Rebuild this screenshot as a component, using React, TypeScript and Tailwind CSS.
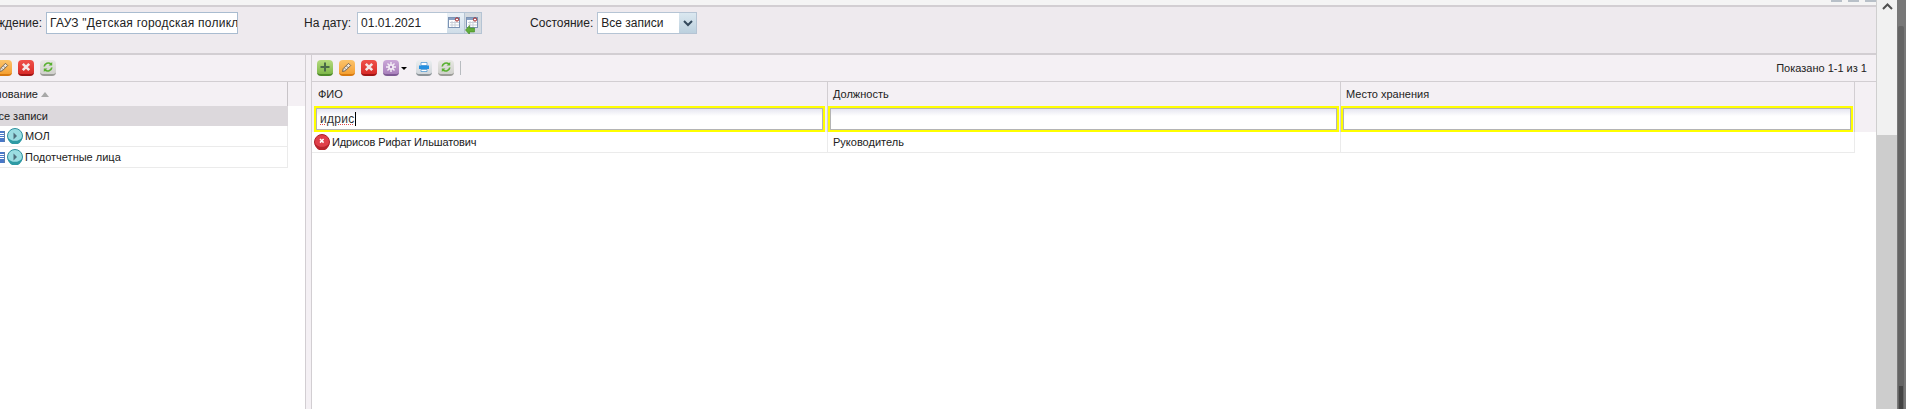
const font = "font-['Liberation_Sans',sans-serif]";

function ToolIcon({ tone, children }: { tone: string; children: React.ReactNode }) {
  return (
    <div className={`flex h-4 w-4 shrink-0 items-center justify-center rounded-[4px] border-b-2 bg-gradient-to-b ${tone}`}>
      <svg width="12" height="12" viewBox="0 0 12 12">
        {children}
      </svg>
    </div>
  );
}

const AddIcon = () => (
  <ToolIcon tone="from-[#b6dc7e] to-[#7fb84a] border-[#4f8a2a]">
    <path d="M5 1.5h2v3.5h3.5v2H7v3.5H5V7H1.5V5H5z" fill="#4a6a48" />
  </ToolIcon>
);
const EditIcon = () => (
  <ToolIcon tone="from-[#fcc46a] to-[#f5a030] border-[#d87a10]">
    <path d="M1.5 10.5l.8-3 5.2-5.2 2.2 2.2-5.2 5.2z" fill="#efe6da" stroke="#6a5a48" strokeWidth="0.9" />
    <path d="M3.5 7l2 2M5.5 5l2 2" stroke="#6a5a48" strokeWidth="0.7" />
  </ToolIcon>
);
const DeleteIcon = () => (
  <ToolIcon tone="from-[#f0514a] to-[#d82a28] border-[#a01414]">
    <path d="M2.8 2.8l6.4 6.4M9.2 2.8l-6.4 6.4" stroke="#f4e8e8" strokeWidth="2.6" />
  </ToolIcon>
);
const GearIcon = () => (
  <ToolIcon tone="from-[#cba8d8] to-[#a980bc] border-[#7e5a94]">
    <circle cx="6" cy="6" r="3" fill="#f4eef6" />
    <circle cx="6" cy="6" r="1.2" fill="#a980bc" />
    <path d="M6 1v2M6 9v2M1 6h2M9 6h2M2.5 2.5l1.4 1.4M8.1 8.1l1.4 1.4M9.5 2.5L8.1 3.9M3.9 8.1L2.5 9.5" stroke="#f4eef6" strokeWidth="1.4" />
  </ToolIcon>
);
const PrintIcon = () => (
  <ToolIcon tone="from-[#eceff1] to-[#d2d7db] border-[#8d9499]">
    <path d="M3 1.5h6v3H3z" fill="#fff" stroke="#3f8fd0" strokeWidth="0.7" />
    <path d="M1 4.5h10v3.5H1z" fill="#2490e0" />
    <path d="M3 8.5h6v2H3z" fill="#fff" stroke="#3f8fd0" strokeWidth="0.7" />
  </ToolIcon>
);
const RefreshIcon = () => (
  <ToolIcon tone="from-[#e8e8e4] to-[#d0d0cc] border-[#9c9c98]">
    <path d="M2.2 5.5A4 4 0 0 1 9 3.2M9.8 6.5A4 4 0 0 1 3 8.8" fill="none" stroke="#58b030" strokeWidth="1.7" />
    <path d="M10.2 1v3.6H6.6zM1.8 11V7.4h3.6z" fill="#58b030" />
  </ToolIcon>
);

function CalendarIcon({ back }: { back?: boolean }) {
  return (
    <svg width="16" height="21" viewBox="0 0 16 21">
      <rect x="1.5" y="4.5" width="11" height="10" fill="#fff" stroke="#7c93b4" />
      <rect x="2" y="5" width="10" height="2" fill="#8aa2c4" />
      <path d="M3 9.5h9M3 12h9M5 8v6M8 8v6" stroke="#c9cfd8" />
      <circle cx="10" cy="6.5" r="1.6" fill="#fff" stroke="#a01818" />
      {back && <path d="M0.5 17l4-4.5v2.5h5v4h-5v2.5z" fill="#62ad3a" stroke="#3f8a24" strokeWidth="0.6" />}
    </svg>
  );
}

function PlayBadge() {
  return (
    <svg width="16" height="16" viewBox="0 0 16 16" className="shrink-0">
      <circle cx="8" cy="8" r="7.5" fill="#9adde2" stroke="#2e8f9c" />
      <path d="M1 9.5a7 7 0 0 0 14 0a9 9 0 0 1-14 0z" fill="#2e9aa4" />
      <path d="M6.5 4.5l3.5 3.5-3.5 3.5z" fill="#4f6f7c" />
    </svg>
  );
}

function TreeRow({ label }: { label: string }) {
  return (
    <div className="flex h-[21px] w-[288px] items-center border-b border-r border-[#ebebeb] bg-white">
      <div className="flex h-[11px] w-[5px] shrink-0 flex-col gap-px border-r border-[#5f7fa8] bg-[#4a78c8] pt-[2px]">
        <div className="h-px bg-white" />
        <div className="h-px bg-white" />
        <div className="h-px bg-white" />
      </div>
      <div className="ml-[2px]">
        <PlayBadge />
      </div>
      <span className="ml-[2px]">{label}</span>
    </div>
  );
}

function FilterInput({ value }: { value?: string }) {
  return (
    <div className="flex h-[26px] items-center border-2 border-[#ffff00]">
      <div className="flex h-full w-full items-center border border-[#b4b4b4] bg-gradient-to-b from-[#e6e6f0] to-white to-[35%] pl-[3px] text-[12px] tracking-[0.3px] text-[#333]">
        {value && (
          <>
            <span className="underline decoration-[#e05050] decoration-dotted">{value}</span>
            <span className="h-[14px] w-px bg-black" />
          </>
        )}
      </div>
    </div>
  );
}

export default function App() {
  return (
    <div className={`flex h-[409px] w-[1906px] overflow-hidden bg-white text-[11px] text-[#222] ${font}`}>
      <div className="flex w-[1877px] shrink-0 flex-col border-r border-[#cfcfcf]">
        <div className="flex h-[5px] shrink-0 justify-end gap-[6px] bg-[#f4f4f4]">
          <div className="h-[2px] w-[11px] bg-[#b8c0c8]" />
          <div className="h-[2px] w-[11px] bg-[#b8c0c8]" />
          <div className="h-[2px] w-[11px] bg-[#b8c0c8]" />
        </div>

        {/* filter bar */}
        <div className="flex h-[50px] shrink-0 items-start border-y-2 border-[#d2ced2] bg-[#eeeaee] pt-[5px] text-[12px]">
          <div className="flex h-[22px] w-[42px] items-center justify-end overflow-hidden whitespace-nowrap">Учреждение:</div>
          <div className="ml-[4px] flex h-[22px] w-[192px] items-center overflow-hidden whitespace-nowrap border border-[#a9bcd0] bg-white pl-[3px] tracking-[0.25px]">
            ГАУЗ "Детская городская поликлиника"
          </div>
          <div className="ml-[66px] flex h-[22px] items-center gap-[6px]">
            <span>На дату:</span>
            <div className="flex h-[22px] w-[125px] border border-[#b5c4d4]">
              <div className="flex flex-1 items-center bg-white pl-[3px]">01.01.2021</div>
              <div className="w-[17px] bg-gradient-to-b from-[#eaf1f7] to-[#cfdde8]">
                <CalendarIcon />
              </div>
              <div className="w-[17px] border-l border-[#b5c4d4] bg-[#d4dae0]">
                <CalendarIcon back />
              </div>
            </div>
          </div>
          <div className="ml-[48px] flex h-[22px] items-center gap-[4px]">
            <span>Состояние:</span>
            <div className="flex h-[22px] w-[100px] border border-[#b5c4d4]">
              <div className="flex flex-1 items-center bg-white pl-[3px]">Все записи</div>
              <div className="flex w-[17px] items-center justify-center bg-gradient-to-b from-[#dbe8f0] to-[#bcd0de]">
                <svg width="10" height="7" viewBox="0 0 10 7">
                  <path d="M1 1l4 4 4-4" fill="none" stroke="#34495c" strokeWidth="2" />
                </svg>
              </div>
            </div>
          </div>
        </div>

        <div className="flex min-h-0 flex-1">
          {/* left panel */}
          <div className="flex w-[305px] shrink-0 flex-col">
            <div className="flex h-[27px] shrink-0 items-center gap-[6px] overflow-hidden border-b border-[#d2ced2] bg-[#f4f0f4]">
              <div className="-ml-[4px]">
                <EditIcon />
              </div>
              <DeleteIcon />
              <RefreshIcon />
            </div>
            <div className="flex h-[24px] shrink-0 bg-[#f4f0f4]">
              <div className="flex w-[288px] items-center overflow-hidden border-r border-[#c8c4c8]">
                <div className="flex w-[38px] shrink-0 justify-end overflow-hidden">
                  <span className="whitespace-nowrap">Наименование</span>
                </div>
                <svg width="8" height="5" viewBox="0 0 8 5" className="ml-[3px]">
                  <path d="M4 0L8 5H0z" fill="#a8a8a8" />
                </svg>
              </div>
            </div>
            <div className="flex h-[20px] w-[288px] shrink-0 items-center overflow-hidden bg-[#dcd8dc]">
              <div className="flex w-[48px] justify-end overflow-hidden">
                <span className="whitespace-nowrap">Все записи</span>
              </div>
            </div>
            <TreeRow label="МОЛ" />
            <TreeRow label="Подотчетные лица" />
          </div>

          {/* splitter */}
          <div className="w-[7px] shrink-0 border-x border-[#d2ced2] bg-[#f4f0f4]" />

          {/* right panel */}
          <div className="flex min-w-0 flex-1 flex-col">
            <div className="flex h-[27px] shrink-0 items-center border-b border-[#d2ced2] bg-[#f4f0f4] pl-[5px] pr-[9px]">
              <div className="flex items-center gap-[6px]">
                <AddIcon />
                <EditIcon />
                <DeleteIcon />
                <GearIcon />
              </div>
              <div className="ml-[2px] h-0 w-0 border-x-[3px] border-t-[3px] border-x-transparent border-t-black" />
              <div className="ml-[9px] flex items-center gap-[6px]">
                <PrintIcon />
                <RefreshIcon />
              </div>
              <div className="ml-[6px] h-[14px] w-px bg-[#b8bcc0]" />
              <span className="ml-auto">Показано 1-1 из 1</span>
            </div>

            <div className="grid shrink-0 grid-cols-[515px_513px_514px_1fr] bg-[#f4f0f4]">
              <div className="flex h-[24px] items-center pl-[6px]">ФИО</div>
              <div className="flex h-[24px] items-center border-l border-[#d2ced2] pl-[5px]">Должность</div>
              <div className="flex h-[24px] items-center border-l border-[#d2ced2] pl-[5px]">Место хранения</div>
              <div className="h-[24px] border-l border-[#d2ced2]" />
              <div className="pl-[2px] pr-[2px]">
                <FilterInput value="идрис" />
              </div>
              <div className="border-l border-[#d2ced2] pr-px">
                <FilterInput />
              </div>
              <div className="border-l border-[#d2ced2] pr-px">
                <FilterInput />
              </div>
              <div className="border-l border-[#d2ced2]" />
            </div>

            <div className="grid w-[1543px] shrink-0 grid-cols-[515px_513px_1fr] border-b border-r border-[#ebebeb]">
              <div className="flex h-[20px] items-center pl-[2px]">
                <svg width="16" height="16" viewBox="0 0 16 16" className="shrink-0">
                  <circle cx="8" cy="8" r="7.5" fill="#e0404a" stroke="#b02028" />
                  <path d="M1 9.5a7 7 0 0 0 14 0a9 9 0 0 1-14 0z" fill="#b8242c" />
                  <path d="M6 5l3.6 3.6M9.6 5L6 8.6" stroke="#fff" strokeWidth="1.5" />
                </svg>
                <span className="ml-[2px] tracking-[-0.12px]">Идрисов Рифат Ильшатович</span>
              </div>
              <div className="flex h-[20px] items-center border-l border-[#ebebeb] pl-[5px]">Руководитель</div>
              <div className="h-[20px] border-l border-[#ebebeb]" />
            </div>
          </div>
        </div>
      </div>

      {/* page scrollbar */}
      <div className="flex w-[20px] shrink-0 flex-col bg-[#f1f1f1]">
        <div className="flex h-[135px] justify-center pt-[3px]">
          <svg width="11" height="7" viewBox="0 0 11 7">
            <path d="M1 6l4.5-4.5L10 6" fill="none" stroke="#505050" strokeWidth="2" />
          </svg>
        </div>
        <div className="flex-1 bg-[#cdcdcd]" />
      </div>

      <div className="flex flex-1 flex-col bg-[#787878] pl-px pt-[26px]">
        <div className="flex w-[6px] flex-1 flex-col items-center rounded-t-[2px] bg-[#646464]">
          <div className="mt-auto h-[23px] w-[4px] bg-[#444]" />
        </div>
      </div>
    </div>
  );
}
